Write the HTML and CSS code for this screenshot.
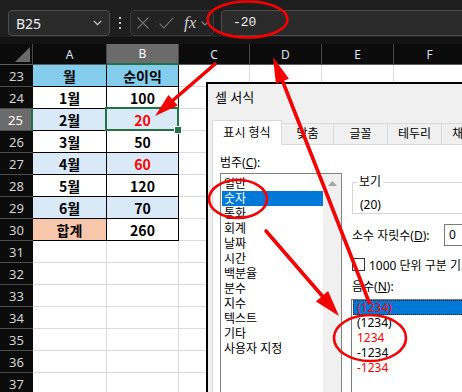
FILE: index.html
```html
<!DOCTYPE html>
<html lang="ko">
<head>
<meta charset="utf-8">
<title>셀 서식</title>
<link rel="stylesheet" href="styles.css">
</head>
<body>
<div class="app">
  <div class="fbar">
    <div class="namebox">
      <span>B25</span>
      <svg class="chev" width="9" height="6" viewBox="0 0 9 6"><path d="M0.8 0.8 L4.5 4.6 L8.2 0.8" fill="none" stroke="#cfcfcf" stroke-width="1.2"/></svg>
    </div>
    <div class="kebab"><i></i><i></i><i></i></div>
    <div class="fnbox">
      <svg class="ico-x" width="12" height="12" viewBox="0 0 12 12"><path d="M0.5 0.5 L11.5 11.5 M11.5 0.5 L0.5 11.5" stroke="#6e6e6e" stroke-width="1.2"/></svg>
      <svg class="ico-ok" width="15" height="12" viewBox="0 0 15 12"><path d="M0.6 6.6 L5 11 L14.4 0.6" fill="none" stroke="#6e6e6e" stroke-width="1.2"/></svg>
      <span class="fx">fx</span>
      <svg class="chev-s" width="8" height="5" viewBox="0 0 8 5"><path d="M0.6 0.6 L4 4 L7.4 0.6" fill="none" stroke="#8a8a8a" stroke-width="1.1"/></svg>
    </div>
    <div class="formula">-20</div>
  </div>

  <div class="sheet">
    <div class="corner"><svg width="16" height="16" viewBox="0 0 16 16"><path d="M15 0 L15 15 L0 15 Z" fill="#6a6a6a"/></svg></div>
    <div class="ch">A</div><div class="ch sel">B</div><div class="ch">C</div><div class="ch">D</div><div class="ch">E</div><div class="ch">F</div>

    <div class="rh">23</div><div class="c t hd">월</div><div class="c t hd">순이익</div><div class="c"></div><div class="c"></div><div class="c"></div><div class="c"></div>
    <div class="rh">24</div><div class="c t">1월</div><div class="c t">100</div><div class="c"></div><div class="c"></div><div class="c"></div><div class="c"></div>
    <div class="rh sel">25</div><div class="c t alt">2월</div><div class="c t alt neg active">20</div><div class="c"></div><div class="c"></div><div class="c"></div><div class="c"></div>
    <div class="rh">26</div><div class="c t">3월</div><div class="c t">50</div><div class="c"></div><div class="c"></div><div class="c"></div><div class="c"></div>
    <div class="rh">27</div><div class="c t alt">4월</div><div class="c t alt neg">60</div><div class="c"></div><div class="c"></div><div class="c"></div><div class="c"></div>
    <div class="rh">28</div><div class="c t">5월</div><div class="c t">120</div><div class="c"></div><div class="c"></div><div class="c"></div><div class="c"></div>
    <div class="rh">29</div><div class="c t alt">6월</div><div class="c t alt">70</div><div class="c"></div><div class="c"></div><div class="c"></div><div class="c"></div>
    <div class="rh">30</div><div class="c t sum">합계</div><div class="c t">260</div><div class="c"></div><div class="c"></div><div class="c"></div><div class="c"></div>
    <div class="rh">31</div><div class="c"></div><div class="c"></div><div class="c"></div><div class="c"></div><div class="c"></div><div class="c"></div>
    <div class="rh">32</div><div class="c"></div><div class="c"></div><div class="c"></div><div class="c"></div><div class="c"></div><div class="c"></div>
    <div class="rh">33</div><div class="c"></div><div class="c"></div><div class="c"></div><div class="c"></div><div class="c"></div><div class="c"></div>
    <div class="rh">34</div><div class="c"></div><div class="c"></div><div class="c"></div><div class="c"></div><div class="c"></div><div class="c"></div>
    <div class="rh">35</div><div class="c"></div><div class="c"></div><div class="c"></div><div class="c"></div><div class="c"></div><div class="c"></div>
    <div class="rh">36</div><div class="c"></div><div class="c"></div><div class="c"></div><div class="c"></div><div class="c"></div><div class="c"></div>
    <div class="rh">37</div><div class="c"></div><div class="c"></div><div class="c"></div><div class="c"></div><div class="c"></div><div class="c"></div>
  </div>

  <div class="dlg">
    <div class="dlg-title">셀 서식</div>
    <div class="tabs">
      <div class="tab on w70">표시 형식</div>
      <div class="tab w52">맞춤</div>
      <div class="tab w54">글꼴</div>
      <div class="tab w54">테두리</div>
      <div class="tab w54">채우기</div>
      <div class="tab w54">보호</div>
    </div>
    <div class="panel">
      <div class="leftcol">
        <div class="lbl">범주(<u>C</u>):</div>
        <div class="catlist">
          <div class="items">
            <div class="it">일반</div>
            <div class="it on">숫자</div>
            <div class="it">통화</div>
            <div class="it">회계</div>
            <div class="it">날짜</div>
            <div class="it">시간</div>
            <div class="it">백분율</div>
            <div class="it">분수</div>
            <div class="it">지수</div>
            <div class="it">텍스트</div>
            <div class="it">기타</div>
            <div class="it">사용자 지정</div>
          </div>
          <div class="vscroll"><svg width="9" height="5" viewBox="0 0 9 5"><path d="M0 5 L4.5 0 L9 5 Z" fill="#a3a3a3"/></svg></div>
        </div>
      </div>
      <div class="rightcol">
        <div class="group">
          <div class="group-lbl">보기</div>
          <div class="sample">(20)</div>
        </div>
        <div class="decrow">
          <span class="declbl">소수 자릿수(<u>D</u>):</span>
          <div class="spin">0</div>
        </div>
        <div class="chkrow">
          <span class="chk"></span>
          <span class="chklbl">1000 단위 구분 기호(,) 사용(U)</span>
        </div>
        <div class="lbl neglbl">음수(<u>N</u>):</div>
        <div class="neglist">
          <div class="nit on red">(1234)</div>
          <div class="nit">(1234)</div>
          <div class="nit red">1234</div>
          <div class="nit">-1234</div>
          <div class="nit red">-1234</div>
        </div>
      </div>
    </div>
  </div>

  <svg class="marks" width="462" height="392" viewBox="0 0 462 392">
    <g fill="none" stroke="#f40000" stroke-width="2.6">
      <ellipse cx="247.5" cy="19.5" rx="40" ry="18"/>
      <ellipse cx="238" cy="199" rx="29" ry="19"/>
      <ellipse cx="370" cy="338" rx="36" ry="23"/>
    </g>
    <g stroke="#f40000" stroke-width="3.6" stroke-linecap="round">
      <line x1="215" y1="64" x2="171" y2="102"/>
      <line x1="369" y1="302" x2="281" y2="77"/>
      <line x1="266" y1="231" x2="324" y2="298"/>
    </g>
    <g fill="#f40000">
      <polygon points="155,116 177.7,105.6 168.5,95"/>
      <polygon points="273,57 288.9,78.7 275.9,83.7"/>
      <polygon points="339,316 328.1,291.1 315.9,301.5"/>
    </g>
  </svg>
</div>
</body>
</html>
```
FILE: styles.css
```css
* { box-sizing: border-box; }
html, body { margin: 0; padding: 0; }
body {
  width: 462px;
  height: 392px;
  overflow: hidden;
  background: #fff;
  font-family: "Noto Sans", "Noto Sans CJK KR", sans-serif;
}
.app {
  position: relative;
  width: 462px;
  height: 392px;
  overflow: hidden;
}

/* formula bar */
.fbar {
  height: 44px;
  background: #1e1e1e;
  border-bottom: 7px solid #131313;
  display: flex;
  align-items: flex-start;
  padding: 10px 0 0 8px;
  overflow: hidden;
}
.namebox {
  flex: none;
  width: 102px;
  height: 26px;
  border: 1px solid #4d4d4d;
  border-radius: 4px;
  background: #2a2a2a;
  display: flex;
  align-items: center;
  justify-content: space-between;
  padding: 0 7px 0 7px;
  color: #ececec;
  font-size: 14px;
}
.kebab {
  flex: none;
  width: 20px;
  height: 26px;
  display: flex;
  flex-direction: column;
  align-items: center;
  justify-content: center;
  gap: 3px;
}
.kebab i {
  display: block;
  width: 2px;
  height: 2px;
  background: #c4c4c4;
}
.fnbox {
  flex: none;
  width: 84px;
  height: 26px;
  border: 1px solid #3a3a3a;
  border-radius: 4px;
  background: #232323;
  display: flex;
  align-items: center;
  padding-left: 6px;
}
.ico-ok { margin-left: 10px; }
.fx {
  margin-left: 10px;
  font-family: "Liberation Serif", serif;
  font-style: italic;
  font-size: 17px;
  line-height: 20px;
  color: #cdcdcd;
}
.chev-s { margin-left: 5px; }
.formula {
  flex: none;
  width: 260px;
  height: 26px;
  margin-left: 7px;
  border: 1px solid #4d4d4d;
  border-radius: 4px;
  background: #2a2a2a;
  padding-left: 11px;
  font-family: "Liberation Mono", "DejaVu Sans Mono", monospace;
  font-size: 13px;
  line-height: 24px;
  color: #f2f2f2;
}

/* sheet */
.sheet {
  display: grid;
  grid-template-columns: 33px 74px 72px 71px 72px 72px 72px;
  grid-template-rows: 21px repeat(15, 22px);
  width: 466px;
}
.corner {
  background: #0b0b0b;
  border-bottom: 1px solid #5c5c5c;
  border-right: 1px solid #474747;
  display: flex;
  align-items: flex-end;
  justify-content: flex-end;
  padding: 0 1px 1px 0;
}
.ch {
  background: #0b0b0b;
  color: #d7e4f1;
  font-size: 12px;
  display: flex;
  align-items: center;
  justify-content: center;
  border-right: 1px solid #474747;
  border-bottom: 1px solid #5c5c5c;
}
.ch.sel {
  background: #6b6b6b;
  color: #fff;
  border-bottom: 2px solid #217346;
}
.rh {
  background: #0b0b0b;
  color: #d2d2d2;
  font-size: 13px;
  display: flex;
  align-items: center;
  justify-content: center;
  border-bottom: 1px solid #4d4d4d;
}
.rh.sel {
  background: #6b6b6b;
  color: #fff;
  border-right: 2px solid #217346;
}
.c {
  background: #fff;
  border-right: 1px solid #dadada;
  border-bottom: 1px solid #dadada;
}
.t {
  border-right-color: #000;
  border-bottom-color: #000;
  display: flex;
  align-items: center;
  justify-content: center;
  font-family: "Noto Sans CJK KR", "Noto Sans", sans-serif;
  font-weight: 700;
  font-size: 14px;
  color: #000;
}
.hd { background: #83cceb; }
.alt { background: #dae9f8; }
.sum { background: #f7c7ac; }
.neg { color: #ff0000; }
.active { position: relative; }
.active::after {
  content: "";
  position: absolute;
  left: -2px;
  top: -2px;
  right: -1px;
  bottom: -1px;
  border: 2px solid #217346;
}
.active::before {
  content: "";
  position: absolute;
  right: -4px;
  bottom: -4px;
  width: 6px;
  height: 6px;
  background: #217346;
  border: 1px solid #fff;
  z-index: 1;
}

/* dialog */
.dlg {
  position: absolute;
  left: 206px;
  top: 82px;
  width: 320px;
  height: 330px;
  border: 2px solid #000;
  background: #f0f0f0;
  font-family: "Noto Sans", "Noto Sans CJK KR", sans-serif;
  font-size: 12px;
  color: #000;
}
.dlg-title {
  height: 36px;
  line-height: 26px;
  padding-left: 7px;
  font-size: 13px;
}
.tabs {
  display: flex;
  align-items: flex-end;
  height: 24px;
  margin-left: 4px;
}
.tab {
  flex: none;
  height: 21px;
  line-height: 20px;
  text-align: center;
  background: #f0f0f0;
  border-top: 1px solid #d9d9d9;
  border-right: 1px solid #d9d9d9;
  font-size: 12px;
}
.tab.on {
  position: relative;
  z-index: 1;
  height: 25px;
  line-height: 24px;
  margin-bottom: -1px;
  background: #fff;
  border-left: 1px solid #d9d9d9;
}
.w70 { width: 70px; }
.w52 { width: 52px; }
.w54 { width: 54px; }
.panel {
  margin-left: 4px;
  height: 270px;
  border: 1px solid #d9d9d9;
  background: #fff;
  display: flex;
  padding: 10px 0 0 7px;
}
.lbl {
  line-height: 16px;
  height: 16px;
}
.leftcol {
  flex: none;
  width: 122px;
}
.catlist {
  margin-top: 2px;
  width: 122px;
  height: 230px;
  border: 1px solid #828282;
  display: flex;
}
.items {
  flex: 1;
  padding: 2px 0 0 1px;
}
.it {
  height: 15px;
  line-height: 15px;
  padding-left: 2px;
  white-space: nowrap;
}
.it.on {
  background: #0078d7;
  color: #fff;
}
.vscroll {
  flex: none;
  width: 18px;
  background: #f0f0f0;
  display: flex;
  justify-content: center;
  align-items: flex-start;
  padding-top: 7px;
}
.rightcol {
  flex: none;
  width: 160px;
  margin-left: 10px;
}
.group {
  margin-top: 27px;
  height: 32px;
  border: 1px solid #d6d6d6;
  padding-left: 7px;
}
.group-lbl {
  width: fit-content;
  height: 16px;
  margin: -9px 0 0 -3px;
  padding: 0 2px;
  background: #fff;
  line-height: 16px;
}
.sample {
  margin-top: 7px;
  height: 16px;
  line-height: 16px;
}
.decrow {
  margin-top: 10px;
  height: 22px;
  display: flex;
  align-items: center;
}
.declbl {
  flex: none;
  width: 92px;
  white-space: nowrap;
}
.spin {
  flex: none;
  width: 60px;
  height: 22px;
  border: 1px solid #7a7a7a;
  padding-left: 4px;
  line-height: 20px;
}
.chkrow {
  margin-top: 12px;
  height: 13px;
  display: flex;
  align-items: center;
  white-space: nowrap;
}
.chk {
  flex: none;
  width: 13px;
  height: 13px;
  border: 1px solid #333;
  background: #fff;
}
.chklbl { margin-left: 4px; }
.neglbl { margin-top: 8px; }
.neglist {
  margin-top: 4px;
  width: 160px;
  height: 110px;
  border: 1px solid #7a7a7a;
  margin-left: -1px;
  padding-left: 1px;
}
.nit {
  height: 15px;
  line-height: 15px;
  padding-left: 4px;
}
.nit.red { color: #ff0000; }
.nit.on {
  background: #0078d7;
  outline: 1px dotted #222;
  outline-offset: -1px;
}

/* annotations */
.marks {
  position: absolute;
  left: 0;
  top: 0;
  pointer-events: none;
  z-index: 5;
}
```
